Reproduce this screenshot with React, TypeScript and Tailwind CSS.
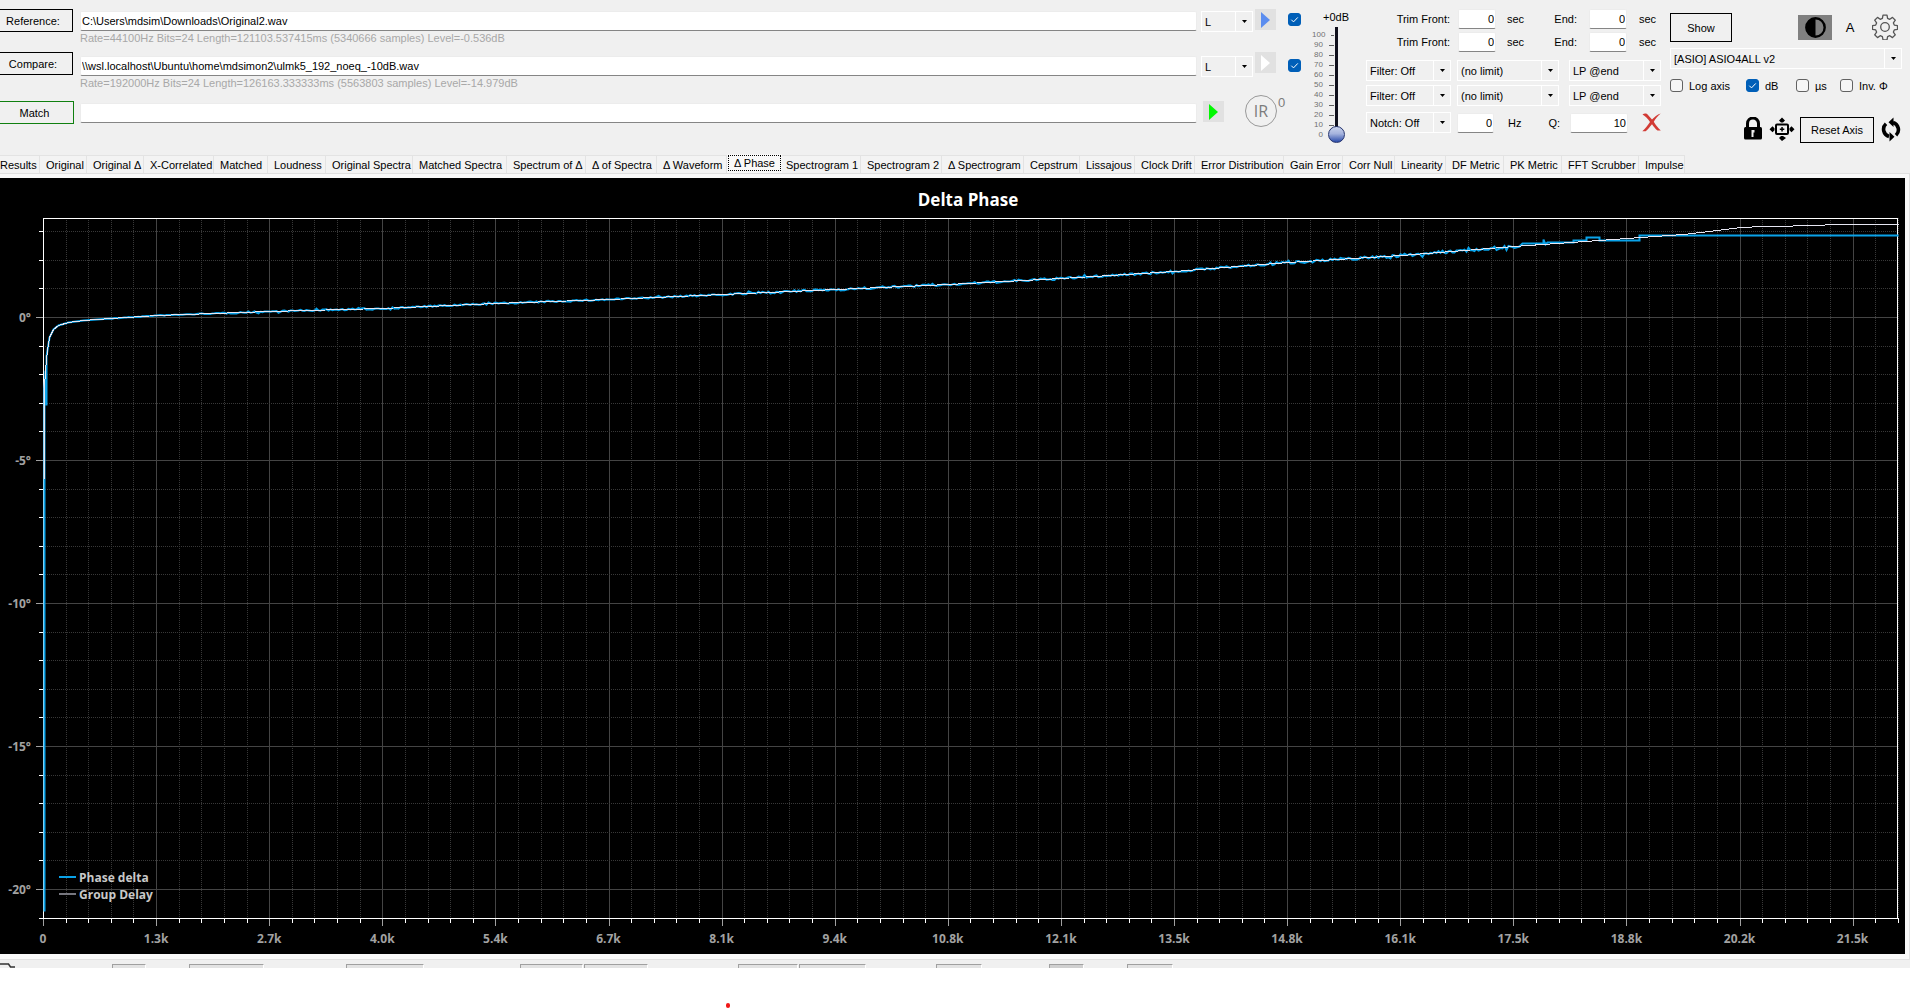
import React, { useState } from 'react';

const TABS = [
  { label: 'Results', width: 'w-[40px] pl-0' },
  { label: 'Original', width: 'w-[47px] pl-1.5' },
  { label: 'Original Δ', width: 'w-[57px] pl-1.5' },
  { label: 'X-Correlated', width: 'w-[70px] pl-1.5' },
  { label: 'Matched', width: 'w-[54px] pl-1.5' },
  { label: 'Loudness', width: 'w-[58px] pl-1.5' },
  { label: 'Original Spectra', width: 'w-[87px] pl-1.5' },
  { label: 'Matched Spectra', width: 'w-[94px] pl-1.5' },
  { label: 'Spectrum of Δ', width: 'w-[79px] pl-1.5' },
  { label: 'Δ of Spectra', width: 'w-[71px] pl-1.5' },
  { label: 'Δ Waveform', width: 'w-[70px] pl-1.5' },
  { label: 'Δ Phase', width: 'w-[55px]' },
  { label: 'Spectrogram 1', width: 'w-[79px] pl-1' },
  { label: 'Spectrogram 2', width: 'w-[81px] pl-1.5' },
  { label: 'Δ Spectrogram', width: 'w-[82px] pl-1.5' },
  { label: 'Cepstrum', width: 'w-[56px] pl-1.5' },
  { label: 'Lissajous', width: 'w-[55px] pl-1.5' },
  { label: 'Clock Drift', width: 'w-[60px] pl-1.5' },
  { label: 'Error Distribution', width: 'w-[89px] pl-1.5' },
  { label: 'Gain Error', width: 'w-[59px] pl-1.5' },
  { label: 'Corr Null', width: 'w-[52px] pl-1.5' },
  { label: 'Linearity', width: 'w-[51px] pl-1.5' },
  { label: 'DF Metric', width: 'w-[58px] pl-1.5' },
  { label: 'PK Metric', width: 'w-[58px] pl-1.5' },
  { label: 'FFT Scrubber', width: 'w-[77px] pl-1.5' },
  { label: 'Impulse', width: 'w-[46px] pl-1.5' },
];

const LEVELS = [100, 90, 80, 70, 60, 50, 40, 30, 20, 10, 0];

const X_LABELS = ['0', '1.3k', '2.7k', '4.0k', '5.4k', '6.7k', '8.1k', '9.4k', '10.8k', '12.1k', '13.5k', '14.8k', '16.1k', '17.5k', '18.8k', '20.2k', '21.5k'];

interface SelectProps {
  label: string;
  value: string;
  className: string;
}

const Select: React.FC<SelectProps> = ({ label, value, className }) => (
  <div className={`relative h-[21px] shrink-0 ${className}`}>
    <select aria-label={label} className="block h-full w-full appearance-none border border-white bg-[#f0f0f0] pl-[3px] pr-5 pt-px text-[11px] leading-[18px] text-black outline-none">
      <option>{value}</option>
    </select>
    <span className="pointer-events-none absolute inset-y-0 right-0 flex w-[18px] items-center justify-center border-l border-white">
      <svg width="5" height="3" viewBox="0 0 5 3"><path d="M0 0h5L2.5 3z" /></svg>
    </span>
  </div>
);

interface CheckProps {
  label: string;
  checked?: boolean;
  hideLabel?: boolean;
}

const Check: React.FC<CheckProps> = ({ label, checked = false, hideLabel = false }) => {
  const [on, setOn] = useState(checked);
  return (
    <label className="flex h-[13px] items-center gap-1.5 whitespace-nowrap">
      <span className="relative block size-[13px]">
        <input
          type="checkbox"
          aria-label={label}
          checked={on}
          onChange={() => setOn(!on)}
          className="block size-[13px] appearance-none rounded-[3px] border border-[#626262] bg-[#f6f6f6] checked:border-[#005fb8] checked:bg-[#005fb8]"
        />
        {on && (
          <svg className="pointer-events-none absolute inset-0" width="13" height="13" viewBox="0 0 13 13" fill="none" stroke="#fff">
            <path d="M3.3 6.7l2.2 2.2 4.3-4.5" />
          </svg>
        )}
      </span>
      {!hideLabel && <span>{label}</span>}
    </label>
  );
};

interface NumberBoxProps {
  label: string;
  value: string;
  className: string;
}

const NumberBox: React.FC<NumberBoxProps> = ({ label, value, className }) => (
  <input
    aria-label={label}
    defaultValue={value}
    className={`h-5 shrink-0 rounded-[2px] border border-[#ececec] border-b-[#858585] bg-white pr-px text-right text-[11px] outline-none ${className}`}
  />
);

const PlayButton: React.FC<{ label: string; color: string }> = ({ label, color }) => (
  <button aria-label={label} className="flex size-[21px] shrink-0 items-center justify-center bg-[#e1e1e1]">
    <svg width="9" height="16" viewBox="0 0 9 16"><path d="M0 0l9 8-9 8z" fill={color} /></svg>
  </button>
);

const FileBox: React.FC<{ label: string; value: string }> = ({ label, value }) => (
  <input
    aria-label={label}
    defaultValue={value}
    className="block h-5 w-full rounded-[2px] border border-[#ececec] border-b-[#858585] bg-white pl-px text-[11px] outline-none"
  />
);

const Files: React.FC = () => (
  <div className="min-w-0 flex-1 pt-[9px]">
    <div className="flex h-[43px] items-start">
      <button className="mr-[7px] h-[23px] w-[73px] shrink-0 border border-l-0 border-black pr-1.5">Reference:</button>
      <div className="mr-1 min-w-0 flex-1 pt-[2px]">
        <FileBox label="Reference file" value="C:\Users\mdsim\Downloads\Original2.wav" />
        <p className="leading-[15px] text-[#a8a8a8]">Rate=44100Hz Bits=24 Length=121103.537415ms (5340666 samples) Level=-0.536dB</p>
      </div>
      <div className="flex w-[111px] shrink-0 items-start">
        <div className="pt-[2px]"><Select label="Reference channel" value="L" className="w-[52px]" /></div>
        <div className="pl-[2px]"><PlayButton label="Play reference" color="#5b8def" /></div>
        <div className="pl-3 pt-1"><Check label="Use reference" checked hideLabel /></div>
      </div>
    </div>
    <div className="flex h-[49px] items-start">
      <button className="mr-[7px] h-[23px] w-[73px] shrink-0 border border-l-0 border-black pr-1.5">Compare:</button>
      <div className="mr-1 min-w-0 flex-1 pt-1">
        <FileBox label="Compare file" value="\\wsl.localhost\Ubuntu\home\mdsimon2\ulmk5_192_noeq_-10dB.wav" />
        <p className="leading-[15px] text-[#a8a8a8]">Rate=192000Hz Bits=24 Length=126163.333333ms (5563803 samples) Level=-14.979dB</p>
      </div>
      <div className="flex w-[111px] shrink-0 items-start">
        <div className="pt-1"><Select label="Compare channel" value="L" className="w-[52px]" /></div>
        <div className="pl-[2px]"><PlayButton label="Play compare" color="#ffffff" /></div>
        <div className="pl-3 pt-[7px]"><Check label="Use compare" checked hideLabel /></div>
      </div>
    </div>
    <div className="flex items-start">
      <button className="mr-1.5 h-[23px] w-[74px] shrink-0 border border-l-0 border-[#108010] pr-1">Match</button>
      <div className="mr-1.5 min-w-0 flex-1 pt-[2px]">
        <FileBox label="Match result" value="" />
      </div>
      <div className="flex w-[109px] shrink-0 items-start">
        <PlayButton label="Play match" color="#00f800" />
        <button aria-label="Impulse response" className="-mt-1.5 ml-[21px] flex items-start text-[#7c7c7c]">
          <span className="mr-px flex size-8 items-center justify-center rounded-full border border-[#999] font-['Open_Sans',sans-serif] text-[16px] leading-none">IR</span>
          <span className="text-[13px] leading-4">0</span>
        </button>
      </div>
    </div>
  </div>
);

const Volume: React.FC = () => (
  <div className="w-[54px] shrink-0 pt-[10px]">
    <p className="pl-[11px] leading-[14px]">+0dB</p>
    <div className="flex pt-[3px]">
      <div className="w-[22px] pt-[3px] text-[8px] leading-[10px] text-[#707070]">
        {LEVELS.map((level) => (
          <div key={level} className="flex items-center justify-end gap-1.5">
            <span>{level}</span>
            <span className="h-px w-[5px] bg-[#606060]"></span>
          </div>
        ))}
      </div>
      <input
        type="range"
        aria-label="Volume"
        min={0}
        max={100}
        defaultValue={0}
        className="-ml-1.5 block h-[116px] w-[17px] appearance-none bg-[linear-gradient(#10101c,#10101c)] bg-[length:3px_104px] bg-[position:center_top] bg-no-repeat [direction:rtl] [writing-mode:vertical-lr] [&::-webkit-slider-thumb]:size-[17px] [&::-webkit-slider-thumb]:appearance-none [&::-webkit-slider-thumb]:rounded-full [&::-webkit-slider-thumb]:border [&::-webkit-slider-thumb]:border-[#26356f] [&::-webkit-slider-thumb]:bg-[linear-gradient(#c8d2ec,#a5b3dd_45%,#2b4cab)]"
      />
    </div>
  </div>
);

const Filters: React.FC = () => (
  <div className="w-[304px] shrink-0 pt-[9px]">
    {['Reference', 'Compare'].map((name) => (
      <div key={name} className="mb-[3px] flex h-5 items-center">
        <span className="w-[92px] pr-2 text-right">Trim Front:</span>
        <NumberBox label={`${name} trim front`} value="0" className="w-[38px]" />
        <span className="flex w-[93px] justify-between pl-[11px] pr-3"><span>sec</span><span>End:</span></span>
        <NumberBox label={`${name} trim end`} value="0" className="w-[38px]" />
        <span className="pl-3">sec</span>
      </div>
    ))}
    <div className="mt-2 flex flex-col gap-1">
      {['Reference', 'Compare'].map((name) => (
        <div key={name} className="flex">
          <Select label={`${name} filter`} value="Filter: Off" className="mr-1.5 w-[85px]" />
          <Select label={`${name} limit`} value="(no limit)" className="mr-2.5 w-[102px]" />
          <Select label={`${name} filter type`} value="LP @end" className="w-[92px]" />
        </div>
      ))}
    </div>
    <div className="mt-1.5 flex items-center">
      <Select label="Notch" value="Notch: Off" className="mr-1.5 w-[85px]" />
      <NumberBox label="Notch frequency" value="0" className="w-[37px]" />
      <span className="flex w-[76px] justify-between pl-3.5 pr-2.5"><span>Hz</span><span>Q:</span></span>
      <NumberBox label="Notch Q" value="10" className="w-[58px]" />
      <button aria-label="Clear notch" className="ml-3.5">
        <svg width="19" height="19" viewBox="0 0 19 19" fill="#d23a34">
          <path d="M.5 1.500C2.500.2 4.500.2 6 2l4 4.500C12.500 4 15 1.500 18.700.5 15.500 3.200 13.500 5.800 11.800 8.800c1.700 3 3.700 5.700 7 8.700h-3.300c-2.200-1.700-4-4-5.500-6.300C8 13.500 6 16.500 3.700 18.300H.3C3.200 15.500 5.700 12.500 8 9 6 6 3.500 3.300.5 1.500z" />
        </svg>
      </button>
    </div>
  </div>
);

const Options: React.FC = () => (
  <div className="w-[240px] shrink-0 pr-2 pt-[13px]">
    <div className="flex h-[35px] items-start">
      <button className="h-[29px] w-[62px] border border-black">Show</button>
      <button aria-label="Contrast" className="ml-[66px] mt-[2px] flex h-[25px] w-[34px] items-center justify-center bg-[#808080]">
        <svg width="21" height="21" viewBox="0 0 21 21">
          <circle cx="10.500" cy="10.500" r="9.200" fill="none" stroke="#000" strokeWidth="2.400" />
          <path d="M10.500 1.500v18a9 9 0 0 1 0-18z" />
        </svg>
      </button>
      <button className="ml-3 mt-[5px] w-3 text-[13px] leading-5">A</button>
      <button aria-label="Settings" className="ml-4 mt-px">
        <svg width="26" height="26" viewBox="0 0 26 26" fill="none" stroke="#555" strokeWidth="1.300" strokeLinejoin="round">
          <circle cx="13" cy="13" r="4.300" />
          <path d="M11 1.200h4l.6 3.200 2.200.9 2.700-1.900 2.800 2.800-1.900 2.700.9 2.200 3.200.6v3.600l-3.200.6-.9 2.200 1.900 2.700-2.800 2.800-2.700-1.900-2.200.9-.6 3.200h-4l-.6-3.200-2.200-.9-2.700 1.900-2.800-2.800 1.900-2.700-.9-2.200-3.200-.6v-3.600l3.200-.6.9-2.200-1.900-2.700 2.800-2.800 2.700 1.900 2.200-.9z" />
        </svg>
      </button>
    </div>
    <Select label="Audio device" value="[ASIO] ASIO4ALL v2" className="w-full" />
    <div className="mt-2.5 flex">
      <div className="w-[76px]"><Check label="Log axis" /></div>
      <div className="w-[50px]"><Check label="dB" checked /></div>
      <div className="w-11"><Check label="µs" /></div>
      <Check label="Inv. Φ" />
    </div>
    <div className="mt-[25px] flex items-start justify-end pr-px">
      <button aria-label="Lock axis">
        <svg width="18" height="23" viewBox="0 0 18 23">
          <path d="M3.500 11V6.500a5.500 5.500 0 0 1 11 0V11" fill="none" stroke="#000" strokeWidth="3" />
          <rect y="10" width="18" height="12.500" rx="1.500" />
          <path d="M7.500 13h3v2.500h-1V20h-2z" fill="#eee" />
        </svg>
      </button>
      <button aria-label="Fit view" className="ml-[7px]">
        <svg width="26" height="25" viewBox="0 0 26 25">
          <rect x="7" y="7.500" width="12" height="9.500" rx="1" fill="none" stroke="#000" strokeWidth="2" />
          <path d="M13 .5l3 3-2 2h-2l-2-2zM13 24l-3-3 2-2h2l3 2zM.5 12.300l3-3 2 2v2l-2 2zM25.500 12.300l-3-3-2 2v2l2 2zM12.300 10h1.500v1.500h1.500V13h-1.500v1.500h-1.500V13h-1.500v-1.500h1.500z" />
        </svg>
      </button>
      <button className="ml-[5px] h-[26px] w-[74px] border border-black">Reset Axis</button>
      <button aria-label="Refresh" className="ml-[7px]">
        <svg width="20" height="25" viewBox="0 0 20 25">
          <path d="M8 19.500A7.500 7.500 0 0 1 5 6.800M12 5.500A7.500 7.500 0 0 1 15 18.200" fill="none" stroke="#000" strokeWidth="3.600" />
          <path d="M8.500 24.500v-9.500l5 4.800zM12.500.5V10l-5-4.800z" />
        </svg>
      </button>
    </div>
  </div>
);

// Plot geometry inside the chart viewBox
const LEFT = 43;
const RIGHT = 1898;
const TOP = 40;
const BOTTOM = 740;
const X_STEP = 113.1;
const DEGREE = 28.6;
const ZERO = 139;

const DELAY = [
  [44, 300], [44, 210], [45, 192], [47, 172], [49, 159], [53, 151], [58, 147], [68, 144], [83, 142], [110, 140],
  [157, 137], [269, 133], [382, 130], [495, 125], [609, 121], [722, 116], [836, 111], [948, 106], [1061, 100], [1174, 93],
  [1288, 84], [1401, 77], [1514, 68], [1627, 60], [1683, 56], [1717, 52], [1740, 49], [1763, 48], [1824, 47], [1825, 46], [1898, 46],
];

const delayAt = (x: number) => {
  const i = DELAY.findIndex((p) => p[0] > x);
  const [x0, y0] = DELAY[i - 1];
  const [x1, y1] = DELAY[i];
  return y0 + ((y1 - y0) * (x - x0)) / (x1 - x0);
};

const buildPhase = () => {
  let seed = 7;
  const random = () => {
    seed = (seed * 16807) % 2147483647;
    return seed / 2147483647;
  };
  let d = 'M44 733V210L45 192V226H46V178L49 159L53 151L58 147L68 144L83 142L110 140';
  for (let x = 112; x < 1516; x += 2) {
    const spread = x < 220 ? 0.4 : x < 700 ? 0.8 : x < 1250 ? 1.1 : 1.5;
    const spike = random() > 0.95 ? 2 : 1;
    d += `L${x} ${(delayAt(x) + (random() - 0.5) * spread * spike * 2).toFixed(1)}`;
  }
  return d + 'L1519 68L1522 65H1543V61L1545 66L1547 64H1573V62H1586V59H1599V62H1639V57H1898';
};

const PHASE_PATH = buildPhase();
const DELAY_PATH = 'M' + DELAY.map((p) => p.join(' ')).join('L');

const Chart: React.FC = () => {
  const columns = Array.from({ length: 83 }, (_, i) => i).filter((i) => i > 0 && LEFT + (i * X_STEP) / 5 < RIGHT);
  const rows = Array.from({ length: 25 }, (_, i) => 3 - i);

  return (
    <svg viewBox="0 0 1905 776" className="block h-auto w-full bg-black font-['Open_Sans','Noto_Sans',sans-serif] font-bold" role="img" aria-label="Delta Phase">
      <text x="968" y="28" textAnchor="middle" fontSize="17" fill="#fff">Delta Phase</text>

      <g shapeRendering="crispEdges" strokeWidth="1">
        {columns.map((i) => {
          const x = Math.round(LEFT + (i * X_STEP) / 5) + 0.5;
          const major = i % 5 === 0;
          return (
            <g key={i}>
              <path d={`M${x} ${TOP}V${BOTTOM}`} stroke={major ? '#444' : '#383838'} strokeDasharray={major ? undefined : '1 1'} />
              <path d={`M${x} ${BOTTOM}v${major ? 8 : 5}`} stroke={major ? '#a0a0a0' : '#fff'} />
            </g>
          );
        })}
        {rows.map((deg) => {
          const y = Math.round(ZERO - deg * DEGREE) + 0.5;
          const major = deg % 5 === 0;
          return (
            <g key={deg}>
              <path d={`M${LEFT} ${y}H${RIGHT}`} stroke={major ? '#444' : '#383838'} strokeDasharray={major ? undefined : '1 1'} />
              <path d={`M${LEFT} ${y}h${major ? -7 : -4}`} stroke={major ? '#a0a0a0' : '#fff'} />
            </g>
          );
        })}
        <rect x="43.5" y="40.5" width="1854" height="700" fill="none" stroke="#fff" />
        <path d="M43.500 741v7" stroke="#a0a0a0" />
        <path d="M39 740.500h4" stroke="#fff" />
      </g>

      <g fill="none">
        <path d={PHASE_PATH} stroke="#0aa2e8" strokeWidth="2" transform="translate(.5 .5)" />
        <path d={DELAY_PATH} stroke="#e6e6f2" strokeWidth="1" shapeRendering="crispEdges" transform="translate(.5 .5)" />
      </g>

      <g fontSize="12" fill="#a2a2a2">
        {X_LABELS.map((label, i) => (
          <text key={label} x={LEFT + i * X_STEP} y="765" textAnchor="middle">{label}</text>
        ))}
        {[0, -5, -10, -15, -20].map((deg) => (
          <text key={deg} x="31" y={ZERO - deg * DEGREE + 5} textAnchor="end">{deg}°</text>
        ))}
      </g>

      <g fontSize="12" fill="#c8c8c8">
        <path d="M59 699h17" stroke="#0aa2e8" strokeWidth="2" />
        <text x="79" y="704">Phase delta</text>
        <path d="M59 716h17" stroke="#77777f" strokeWidth="2" />
        <text x="79" y="721">Group Delay</text>
      </g>
    </svg>
  );
};

const BOTTOM_BOXES = [
  'ml-[97px] w-[34px] bg-[#e3e3e3]',
  'ml-[43px] w-[75px] bg-[#e3e3e3]',
  'ml-[82px] w-[78px] bg-[#e3e3e3]',
  'ml-[96px] w-[63px] bg-[#e3e3e3]',
  'ml-px w-[64px] bg-[#e3e3e3]',
  'ml-[90px] w-[60px] bg-[#e3e3e3]',
  'ml-px w-[67px] bg-[#e3e3e3]',
  'ml-[70px] w-[46px] bg-[#e3e3e3]',
  'ml-[67px] w-[35px] bg-[#d0d0d0]',
  'ml-[43px] w-[46px] bg-[#e3e3e3]',
];

const App: React.FC = () => {
  const [active, setActive] = useState('Δ Phase');

  return (
    <div className="min-h-screen bg-white font-['Liberation_Sans',Arial,sans-serif] text-[11px] leading-[14px] text-black">
      <div className="bg-[#f0f0f0]">
        <header className="flex h-[154px] items-start">
          <Files />
          <Volume />
          <Filters />
          <Options />
        </header>

        <nav className="flex h-[19px] items-end whitespace-nowrap" role="tablist">
          {TABS.map((tab) =>
            tab.label === active ? (
              <button key={tab.label} role="tab" aria-selected="true" className={`h-[19px] shrink-0 bg-[#f9f9f9] p-px pb-[2px] ${tab.width}`}>
                <span className="flex h-4 items-center justify-center border border-dotted border-black">{tab.label}</span>
              </button>
            ) : (
              <button
                key={tab.label}
                role="tab"
                aria-selected="false"
                onClick={() => setActive(tab.label)}
                className={`h-[18px] shrink-0 border-r border-t border-[#e3e3e3] bg-[#f3f3f3] pt-px text-left ${tab.width}`}
              >
                {tab.label}
              </button>
            )
          )}
        </nav>

        <main className="border-r border-t border-[#e0e0e0] bg-[#f9f9f9] pb-[5px] pr-1 pt-1">
          <Chart />
        </main>

        <footer className="flex h-[9px] items-end overflow-hidden border-t border-[#e0e0e0]">
          <svg width="15" height="5" viewBox="0 0 15 5" fill="none" stroke="#333" strokeWidth="1.500">
            <path d="M0 1h8.500l2 3H15" />
          </svg>
          {BOTTOM_BOXES.map((box) => (
            <span key={box} className={`h-1 shrink-0 border-l border-r border-t border-[#a0a0a0] border-r-white ${box}`}></span>
          ))}
        </footer>
      </div>

      <div className="flex justify-center pr-[454px] pt-[35px]">
        <span className="h-[5px] w-1 rounded-full bg-[#f01818]"></span>
      </div>
    </div>
  );
};

export default App;
